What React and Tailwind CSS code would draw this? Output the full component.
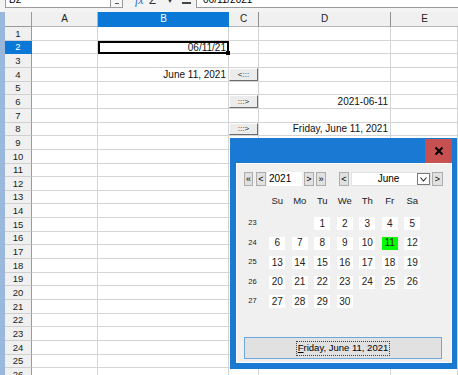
import React from 'react';

const rowH = [14, 13, 14, 14, 13, 14, 14, 13, 14, 14, 13, 14, 13, 14, 14, 13, 14, 14, 13, 14, 14, 13, 14, 14, 13, 14];

const cellText = {
  2: { B: '06/11/21' },
  4: { B: 'June 11, 2021', C: '<:::' },
  6: { C: ':::>', D: '2021-06-11' },
  8: { C: ':::>', D: 'Friday, June 11, 2021' },
};

const weeks = [
  { n: 23, days: [null, null, 1, 2, 3, 4, 5] },
  { n: 24, days: [6, 7, 8, 9, 10, 11, 12] },
  { n: 25, days: [13, 14, 15, 16, 17, 18, 19] },
  { n: 26, days: [20, 21, 22, 23, 24, 25, 26] },
  { n: 27, days: [27, 28, 29, 30, null, null, null] },
];

const navBtn =
  'h-[14px] border border-[#adadad] bg-[#e1e1e1] flex items-center justify-center text-[9px] leading-none text-black';

function SheetButton({ label }) {
  return (
    <div className="relative z-10 w-[32px] h-full border border-t-white border-l-white border-b-[#6d6d6d] border-r-[#6d6d6d] bg-[#ececec] flex items-center justify-center text-[8px] leading-none text-[#222]">
      {label}
    </div>
  );
}

function Row({ index, h }) {
  const r = index + 1;
  const t = cellText[r] || {};
  const hc = h === 14 ? 'h-[14px]' : 'h-[13px]';
  const sel = r === 2;
  const cell = 'border-r border-b border-[#d4d4d4] flex items-center justify-end pr-[2px] text-[10px] leading-none text-[#111] whitespace-nowrap';
  return (
    <div className={`flex shrink-0 ${hc}`}>
      <div
        className={`w-[27px] shrink-0 border-r border-b flex items-center justify-center text-[9.5px] leading-none ${
          sel ? 'bg-[#0a78d6] text-white border-r-[#0a78d6] border-b-[#0a78d6]' : 'bg-[#f0f0f0] text-[#222] border-r-[#9a9a9a] border-b-[#cfcfcf]'
        }`}
      >
        {r}
      </div>
      <div className={`w-[66px] shrink-0 ${cell}`} />
      {sel ? (
        <div className="relative w-[131px] shrink-0 border-2 border-black flex items-center justify-end pr-[1px] text-[10px] leading-none text-[#111]">
          {t.B}
          <div className="absolute -right-[3px] -bottom-[3px] w-[4px] h-[4px] bg-black" />
        </div>
      ) : (
        <div className={`w-[131px] shrink-0 ${cell}`}>{t.B}</div>
      )}
      <div className="w-[30px] shrink-0 border-r border-b border-[#d4d4d4] flex items-stretch">
        {t.C && <SheetButton label={t.C} />}
      </div>
      <div className={`w-[132px] shrink-0 ${cell}`}>{t.D}</div>
      <div className={`flex-1 ${cell}`} />
    </div>
  );
}

function Calendar() {
  return (
    <div className="absolute left-[230px] top-[138px] w-[227px] h-[231px] bg-[#1a79d2] flex flex-col">
      <div className="h-[25px] shrink-0 flex justify-end pr-[5px] pt-[1px]">
        <div className="w-[27px] h-[24px] bg-[#c75050] flex items-center justify-center">
          <svg width="10" height="10" viewBox="0 0 10 10">
            <path d="M1.5 1.5L8.5 8.5M8.5 1.5L1.5 8.5" stroke="#000" strokeWidth="2" />
          </svg>
        </div>
      </div>
      <div className="flex-1 ml-[6px] mr-[5px] mb-[6px] bg-[#f0f0f0] border border-white flex flex-col">
        <div className="flex items-center mt-[8px] ml-[7px] h-[14px]">
          <div className={`${navBtn} w-[9px]`}>«</div>
          <div className={`${navBtn} w-[10px] ml-[3px]`}>&lt;</div>
          <div className="w-[35px] h-[14px] ml-[1px] bg-white flex items-center pl-[2px] text-[10px] leading-none">2021</div>
          <div className={`${navBtn} w-[10px] ml-[2px]`}>&gt;</div>
          <div className={`${navBtn} w-[10px] ml-[2px]`}>»</div>
          <div className={`${navBtn} w-[10px] ml-[13px]`}>&lt;</div>
          <div className="w-[80px] h-[14px] ml-[2px] bg-white border border-[#e3e3e3] flex items-center">
            <div className="flex-1 text-center text-[10px] leading-none pl-[8px]">June</div>
            <div className="w-[13px] h-[12px] border border-[#7a7a7a] bg-white flex items-center justify-center">
              <svg width="7" height="5" viewBox="0 0 7 5">
                <path d="M0.5 0.5L3.5 4L6.5 0.5" stroke="#222" strokeWidth="1.1" fill="none" />
              </svg>
            </div>
          </div>
          <div className={`${navBtn} w-[11px] ml-[1px]`}>&gt;</div>
        </div>

        <div className="grid grid-cols-[27px_repeat(7,22.5px)] ml-[2px] mt-[8px] h-[14px] items-center text-[9.5px] leading-none text-[#222]">
          <div />
          {['Su', 'Mo', 'Tu', 'We', 'Th', 'Fr', 'Sa'].map((d) => (
            <div key={d} className="text-center">{d}</div>
          ))}
        </div>

        <div className="flex flex-col mt-[6px] ml-[2px]">
          {weeks.map((w) => (
            <div key={w.n} className="grid grid-cols-[27px_repeat(7,22.5px)] h-[19.5px] items-center">
              <div className="text-center text-[7.5px] leading-none text-[#222] -mt-[2px]">{w.n}</div>
              {w.days.map((d, i) => (
                <div key={i} className="flex justify-center">
                  {d && (
                    <div
                      className={`w-[16px] h-[13px] flex items-center justify-center text-[10px] leading-none text-[#222] ${
                        d === 11 ? 'bg-[#00ff00]' : 'bg-white'
                      }`}
                    >
                      {d}
                    </div>
                  )}
                </div>
              ))}
            </div>
          ))}
        </div>

        <div className="mt-auto mb-[3px] ml-[7px] w-[198px] h-[22px] border border-[#6fa8dc] bg-[#e1e1e1] flex items-center justify-center">
          <div className="h-[15px] px-[1px] border border-dotted border-[#444] flex items-center text-[9.5px] leading-none text-black whitespace-nowrap">
            <span className="underline">F</span>riday, June 11, 2021
          </div>
        </div>
      </div>
    </div>
  );
}

export default function App() {
  return (
    <div className="relative w-[458px] h-[375px] overflow-hidden bg-white font-['Liberation_Sans',Arial,sans-serif]">
      {/* formula bar, only its lower edge is in view */}
      <div className="h-[12px] bg-[#f3f3f3] overflow-hidden">
        <div className="flex items-end h-[20px] -mt-[12px]">
          <div className="ml-[5px] w-[106px] h-[19px] bg-white border border-[#9a9a9a] flex items-end pl-[3px] pb-[2px] text-[10px] leading-none">B2</div>
          <div className="w-[12px] h-[19px] border border-l-0 border-[#9a9a9a] bg-[#f7f7f7] flex items-end justify-center pb-[3px]">
            <div className="w-[4px] h-[1px] bg-[#555]" />
          </div>
          <div className="ml-[12px] h-[19px] flex items-end pb-[2px] text-[12px] italic font-['Liberation_Serif',serif] text-[#1f6fc5] leading-none">fx</div>
          <div className="ml-[5px] h-[19px] flex items-end pb-[2px] text-[12px] text-[#333] leading-none">Σ</div>
          <div className="ml-[10px] h-[19px] flex items-end pb-[3px] text-[8px] text-[#333] leading-none">▼</div>
          <div className="ml-[8px] h-[19px] flex items-end pb-[4px]">
            <div className="w-[9px] h-[2px] bg-[#444]" />
          </div>
          <div className="ml-[5px] flex-1 h-[19px] bg-white border border-r-0 border-[#9a9a9a] flex items-end pl-[6px] pb-[2px] text-[10px] leading-none">06/11/2021</div>
        </div>
      </div>

      <div className="flex h-[363px]">
        <div className="w-[5px] shrink-0 bg-[#99b8dc]" />
        <div className="flex-1 flex flex-col overflow-hidden">
          <div className="flex h-[15px] shrink-0 text-[10px] leading-none">
            <div className="w-[27px] shrink-0 bg-[#f0f0f0] border-r border-b border-[#9a9a9a]" />
            <div className="w-[66px] shrink-0 bg-[#f0f0f0] border-r border-b border-[#b5b5b5] flex items-center justify-center text-[#222]">A</div>
            <div className="w-[131px] shrink-0 bg-[#0a78d6] border-b border-[#0a78d6] flex items-center justify-center text-white">B</div>
            <div className="w-[30px] shrink-0 bg-[#f0f0f0] border-r border-b border-[#8f8f8f] border-b-[#b5b5b5] flex items-center justify-center text-[#222]">C</div>
            <div className="w-[132px] shrink-0 bg-[#f0f0f0] border-r border-b border-[#8f8f8f] border-b-[#b5b5b5] flex items-center justify-center text-[#222]">D</div>
            <div className="flex-1 bg-[#f0f0f0] border-b border-[#b5b5b5] flex items-center justify-center text-[#222]">E</div>
          </div>
          {rowH.map((h, i) => (
            <Row key={i} index={i} h={h} />
          ))}
        </div>
      </div>

      <Calendar />
    </div>
  );
}
